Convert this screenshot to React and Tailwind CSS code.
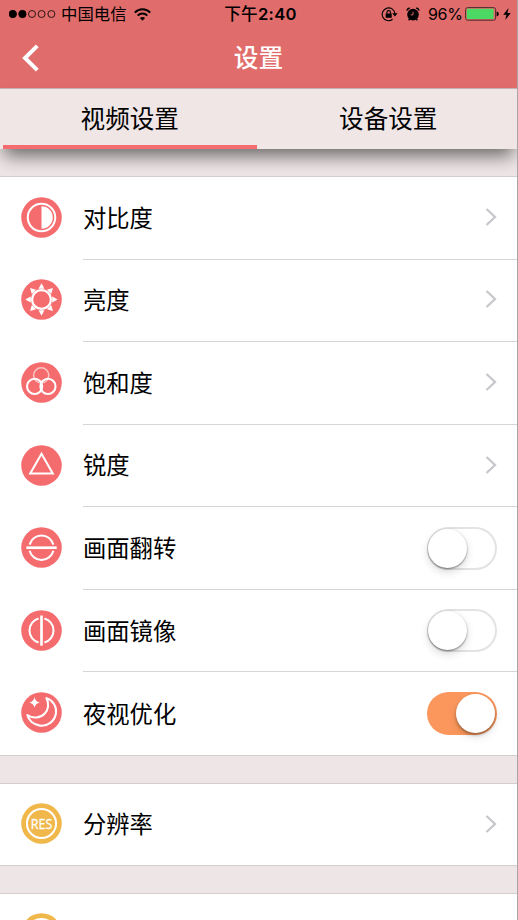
// Settings.jsx
import React, { useState } from 'react';

const IconBase = ({ color = '#f56c6e', children }) => (
  <svg width="41" height="41" viewBox="0 0 40 40" fill="none" stroke="#fff" strokeWidth="2" className="shrink-0">
    <circle cx="20" cy="20" r="19.8" fill={color} stroke="none" />
    {children}
  </svg>
);

const ContrastIcon = () => (
  <IconBase>
    <circle cx="20" cy="20" r="13.4" />
    <path d="M20 9 A11 11 0 0 1 20 31 Z" fill="#fff" stroke="none" />
  </IconBase>
);

const BrightnessIcon = () => (
  <IconBase>
    <circle cx="20" cy="20" r="9.2" strokeWidth="2.2" />
    {[0, 45, 90, 135, 180, 225, 270, 315].map((deg) => (
      <path key={deg} d="M20 4.2 L22.9 9.6 H17.1 Z" fill="#fff" stroke="none" transform={`rotate(${deg} 20 20)`} />
    ))}
  </IconBase>
);

const SaturationIcon = () => (
  <IconBase>
    <circle cx="19.7" cy="13" r="7.4" strokeWidth="1.5" opacity="0.6" />
    <circle cx="13.3" cy="23.8" r="7.4" strokeWidth="2" />
    <circle cx="26.3" cy="23.8" r="7.4" strokeWidth="2" />
  </IconBase>
);

const SharpnessIcon = () => (
  <IconBase>
    <path d="M20 8.6 L31 27.8 H9 Z" />
  </IconBase>
);

const FlipIcon = () => (
  <IconBase>
    <path d="M8.4 17.2 A12 12 0 0 1 31.6 17.2 M8.4 23.2 A12 12 0 0 0 31.6 23.2" />
    <path d="M5.2 20.2 H34.8" strokeWidth="2.6" />
  </IconBase>
);

const MirrorIcon = () => (
  <IconBase>
    <path d="M17.2 8.4 A12 12 0 0 0 17.2 31.6 M22.8 8.4 A12 12 0 0 1 22.8 31.6" />
    <path d="M20 5.4 V34.8" strokeWidth="2.6" />
  </IconBase>
);

const NightIcon = () => (
  <IconBase>
    <path d="M24.8 6 C31.5 8.2 35.2 14.6 34 21.2 C32.7 28.6 25.8 33.8 18.4 32.8 C12.2 32 7.4 27.8 6.2 22.4 C11.4 26.2 18.6 25.6 23 21.2 C27 17.2 27.6 11 24.8 6 Z" strokeLinejoin="round" />
    <path d="M13.2 5 Q14.1 9.3 18.4 10.2 Q14.1 11.1 13.2 15.4 Q12.3 11.1 8 10.2 Q12.3 9.3 13.2 5 Z" fill="#fff" stroke="none" />
  </IconBase>
);

const ResolutionIcon = () => (
  <IconBase color="#f0b74a">
    <circle cx="20" cy="20" r="14.2" />
    <text
      x="20"
      y="25.3"
      textAnchor="middle"
      textLength="21"
      lengthAdjust="spacingAndGlyphs"
      fill="#fff"
      stroke="#fff"
      strokeWidth="0.3"
      className="font-['Open_Sans',sans-serif] text-[14.5px] font-medium"
    >
      RES
    </text>
  </IconBase>
);

const Chevron = () => (
  <svg width="12" height="18" viewBox="0 0 12 18" fill="none" stroke="#c7c7cc" strokeWidth="2.3" className="-mt-[2px]">
    <path d="M1.5 1 L10 9 L1.5 17" />
  </svg>
);

const Switch = ({ checked, onChange }) => (
  <button
    role="switch"
    aria-checked={checked}
    onClick={() => onChange(!checked)}
    className={`flex h-[43px] w-[70px] items-center rounded-full ${
      checked ? 'justify-end bg-[#fb975c] pr-[2px]' : 'justify-start border-2 border-[#e3e3e3] bg-white'
    }`}
  >
    <span
      className={`rounded-full bg-white ${
        checked
          ? 'size-[39px] shadow-[0_2px_3px_rgba(0,0,0,0.3),0_4px_9px_rgba(0,0,0,0.12)]'
          : '-ml-[1px] size-[39px] shadow-[0_1px_2px_rgba(0,0,0,0.45),0_4px_9px_rgba(0,0,0,0.15)]'
      }`}
    />
  </button>
);

const Row = ({ icon, label, last, children }) => (
  <div className="flex flex-1 items-stretch pl-[21px]">
    <div className="flex w-[62px] items-center pb-[2px]">{icon}</div>
    <div
      className={`flex flex-1 items-center justify-between pr-[20px] ${last ? '' : 'border-b border-[#d6d6d8]'}`}
    >
      <span className="pt-px text-[23.3px] leading-none">{label}</span>
      {children}
    </div>
  </div>
);

const StatusBar = () => (
  <div className="grid h-[28px] grid-cols-[1fr_auto_1fr] items-center">
    <div className="flex items-center pl-[9px]">
      <svg width="47" height="10" viewBox="0 0 47 10" stroke="#000" strokeWidth="0.8" fill="none">
        <circle cx="3.8" cy="5" r="3.7" fill="#000" />
        <circle cx="13.4" cy="5" r="3.7" fill="#000" />
        <circle cx="23" cy="5" r="3.5" />
        <circle cx="32.6" cy="5" r="3.5" />
        <circle cx="42.4" cy="5" r="3.5" />
      </svg>
      <span className="ml-[5px] pt-px text-[16.4px] leading-none">中国电信</span>
      <svg width="17" height="13" viewBox="0 0 17 13" fill="none" stroke="#000" strokeWidth="2" className="ml-[7.5px]">
        <path d="M0.8 4.6 C5 0.2 12 0.2 16.2 4.6" />
        <path d="M3.7 7.6 C6.4 4.9 10.6 4.9 13.3 7.6" />
        <path d="M8.5 12.8 L5.9 10 C7.3 8.6 9.7 8.6 11.1 10 Z" fill="#000" stroke="none" />
      </svg>
    </div>
    <span className="pl-[4px] text-[16.6px] leading-none font-medium tracking-[0.3px]">下午<span className="font-semibold">2:40</span></span>
    <div className="flex items-center justify-end pr-[6px]">
      <svg width="17" height="15" viewBox="0 0 17 15" fill="none" stroke="#000" strokeWidth="1.1">
        <path d="M14 7 A6.4 6.4 0 1 0 11.6 12.3" />
        <path d="M11.2 6.2 H16.6 L13.9 9.6 Z" fill="#000" stroke="none" />
        <rect x="4.7" y="6.4" width="6" height="4.4" fill="#000" stroke="none" />
        <path d="M5.9 6.6 V5.4 A1.8 1.8 0 0 1 9.5 5.4 V6.6" />
      </svg>
      <svg width="14" height="14" viewBox="0 0 14 14" fill="none" stroke="#000" strokeWidth="1.5" className="ml-[8px]">
        <circle cx="7" cy="7.6" r="5.8" fill="#000" stroke="none" />
        <path d="M0.9 3.6 Q1.4 1.6 3.8 1.1 M13.1 3.6 Q12.6 1.6 10.2 1.1 M2.6 13.2 L4 11.6 M11.4 13.2 L10 11.6" />
        <path d="M7 4.6 V7.9 H4.6" stroke="#e16c6c" strokeWidth="0.9" />
      </svg>
      <span className="ml-[8px] w-[35px] text-[16px] leading-none tracking-[-0.3px] whitespace-nowrap">96%</span>
      <svg width="34" height="14" viewBox="0 0 34 14" className="ml-[2px]">
        <rect x="0.6" y="0.6" width="30" height="12.6" rx="2" fill="none" stroke="#4c2c2c" />
        <rect x="1.8" y="1.8" width="26.8" height="10.2" rx="1" fill="#4bd964" />
        <path d="M31.6 4.6 Q33.8 5 33.8 7 Q33.8 9 31.6 9.4 Z" fill="#000" />
      </svg>
      <svg width="8" height="12" viewBox="0 0 8 12" className="ml-[4px]">
        <path d="M5.6 0 L0.2 6.8 H3.4 L2.2 12 L7.8 4.9 H4.4 Z" fill="#000" />
      </svg>
    </div>
  </div>
);

const tabs = ['视频设置', '设备设置'];

const App = () => {
  const [activeTab, setActiveTab] = useState(0);
  const [flip, setFlip] = useState(false);
  const [mirror, setMirror] = useState(false);
  const [night, setNight] = useState(true);

  return (
    <div className="flex h-[920px] w-[518px] flex-col overflow-hidden border-r border-[#a9a5a7] bg-[#eee6e6] font-[Inter,'Noto_Sans_CJK_SC',sans-serif] text-black">
      <header className="h-[89px] shrink-0 border-b border-[#c9b4b5] bg-[#e16c6c]">
        <StatusBar />
        <div className="grid h-[60px] grid-cols-3 items-center">
          <button className="pl-[22px]">
            <svg width="18" height="28" viewBox="0 0 18 28" fill="none" stroke="#fff" strokeWidth="4">
              <path d="M15.3 1.8 L3 14 L15.3 26.2" />
            </svg>
          </button>
          <h1 className="pt-px text-center text-[24.7px] leading-none font-medium text-white">设置</h1>
        </div>
      </header>

      <nav className="z-10 grid h-[60px] shrink-0 grid-cols-2 bg-[#f0e6e6] shadow-[0_11px_18px_-4px_rgba(0,0,0,0.55)]">
        {tabs.map((tab, i) => (
          <button
            key={tab}
            onClick={() => setActiveTab(i)}
            className={`mr-[2px] ml-[3px] border-b-4 pt-[5px] text-[24.6px] leading-none ${
              activeTab === i ? 'border-[#f56c6e]' : 'border-transparent'
            }`}
          >
            {tab}
          </button>
        ))}
      </nav>

      {/* raised above the tab shadow, which only falls on the gap */}
      <section className="z-20 mt-[27px] flex h-[580px] shrink-0 flex-col border-y border-[#d3cdcf] bg-white">
        <Row icon={<ContrastIcon />} label="对比度"><Chevron /></Row>
        <Row icon={<BrightnessIcon />} label="亮度"><Chevron /></Row>
        <Row icon={<SaturationIcon />} label="饱和度"><Chevron /></Row>
        <Row icon={<SharpnessIcon />} label="锐度"><Chevron /></Row>
        <Row icon={<FlipIcon />} label="画面翻转">
          <Switch checked={flip} onChange={setFlip} />
        </Row>
        <Row icon={<MirrorIcon />} label="画面镜像">
          <Switch checked={mirror} onChange={setMirror} />
        </Row>
        <Row icon={<NightIcon />} label="夜视优化" last>
          <Switch checked={night} onChange={setNight} />
        </Row>
      </section>

      <section className="mt-[27px] flex h-[83px] shrink-0 flex-col border-y border-[#d3cdcf] bg-white">
        <Row icon={<ResolutionIcon />} label="分辨率" last><Chevron /></Row>
      </section>

      {/* next group, cut off by the bottom of the screen */}
      <section className="mt-[27px] h-[84px] shrink-0 border-t border-[#d3cdcf] bg-white pt-[19px] pl-[21px]">
        <IconBase color="#f0b74a">
          <circle cx="20" cy="20" r="14.2" />
        </IconBase>
      </section>
    </div>
  );
};

export default App;
